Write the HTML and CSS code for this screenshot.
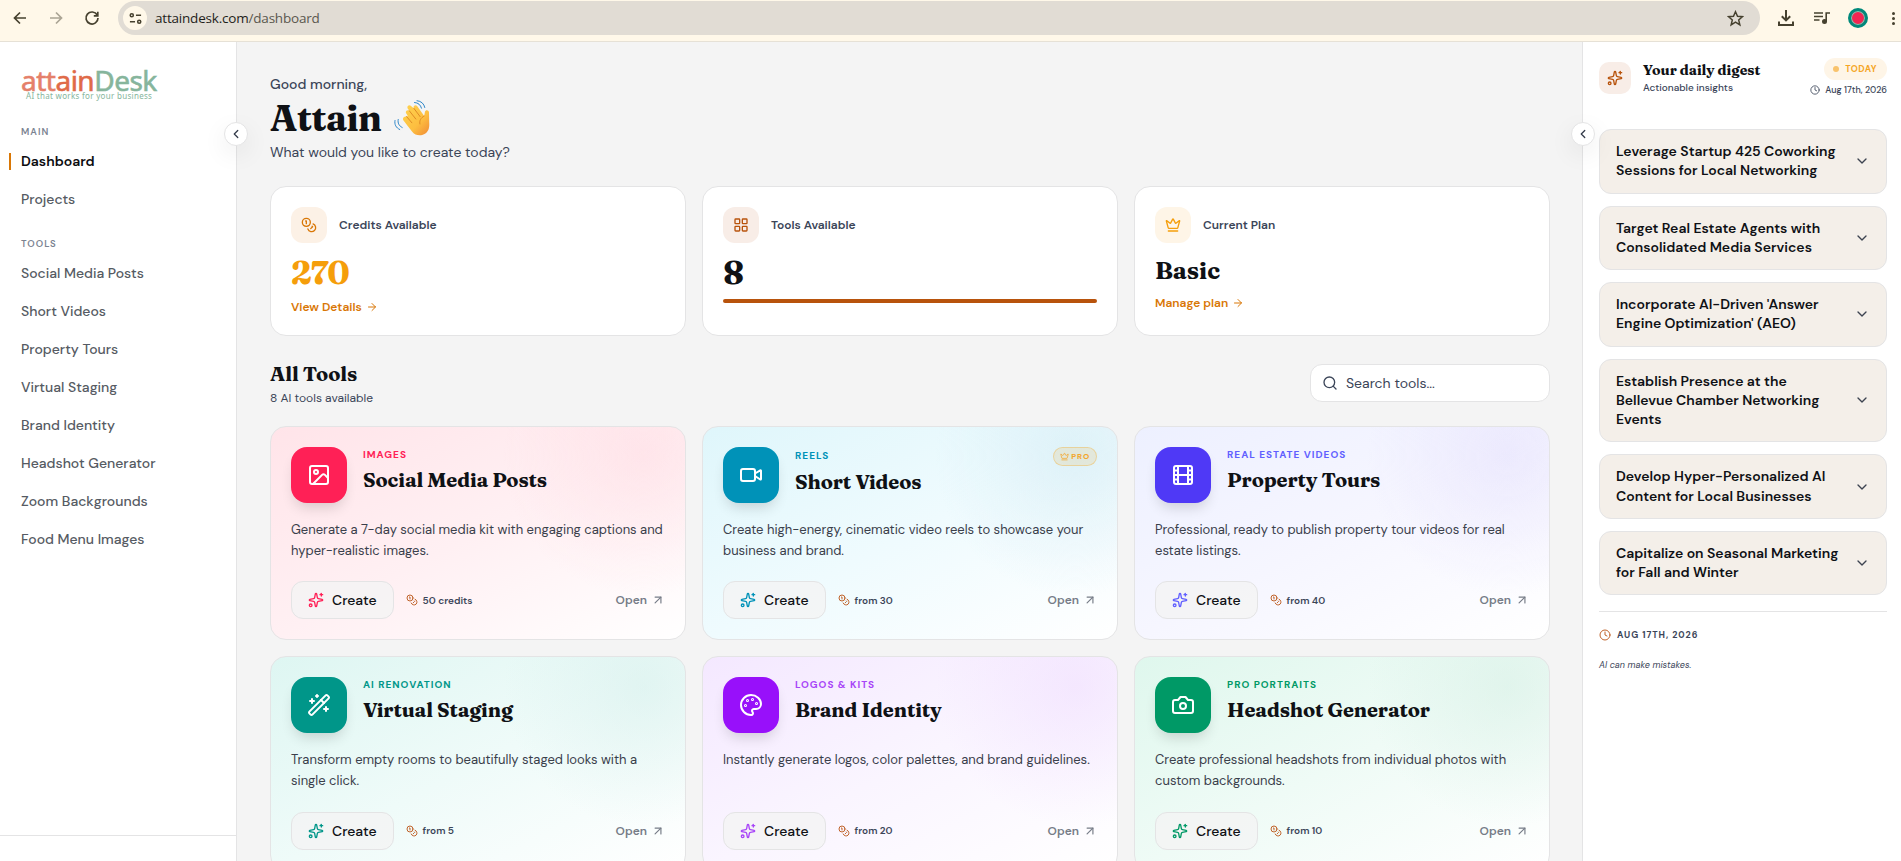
FILE: index.html
```html
<!DOCTYPE html>
<html lang="en">
<head>
    <meta charset="UTF-8">
    <title>attainDesk - Dashboard</title>
    <link rel="stylesheet" href="styles.css">
</head>
<body>
    <!-- Icon sprite -->
    <svg class="sprite" aria-hidden="true">
        <symbol id="i-coins" viewBox="0 0 24 24"><circle cx="8" cy="8" r="6"/><path d="M18.09 10.37A6 6 0 1 1 10.34 18"/><path d="M7 6h1v4"/><path d="m16.71 13.88.7.71-2.82 2.82"/></symbol>
        <symbol id="i-grid" viewBox="0 0 24 24"><rect x="3" y="3" width="7" height="7" rx="1"/><rect x="14" y="3" width="7" height="7" rx="1"/><rect x="14" y="14" width="7" height="7" rx="1"/><rect x="3" y="14" width="7" height="7" rx="1"/></symbol>
        <symbol id="i-crown" viewBox="0 0 24 24"><path d="M11.562 3.266a.5.5 0 0 1 .876 0L15.39 8.87a1 1 0 0 0 1.516.294L21.183 5.5a.5.5 0 0 1 .798.519l-2.834 10.246a1 1 0 0 1-.956.734H5.81a1 1 0 0 1-.957-.734L2.02 6.02a.5.5 0 0 1 .798-.519l4.276 3.664a1 1 0 0 0 1.516-.294z"/><path d="M5 21h14"/></symbol>
        <symbol id="i-sparkles" viewBox="0 0 24 24"><path d="M11.017 2.814a1 1 0 0 1 1.966 0l1.051 5.558a2 2 0 0 0 1.594 1.594l5.558 1.051a1 1 0 0 1 0 1.966l-5.558 1.051a2 2 0 0 0-1.594 1.594l-1.051 5.558a1 1 0 0 1-1.966 0l-1.051-5.558a2 2 0 0 0-1.594-1.594l-5.558-1.051a1 1 0 0 1 0-1.966l5.558-1.051a2 2 0 0 0 1.594-1.594z"/><path d="M20 2v4"/><path d="M22 4h-4"/><circle cx="4" cy="20" r="2"/></symbol>
        <symbol id="i-arrow-right" viewBox="0 0 24 24"><path d="M5 12h14"/><path d="m12 5 7 7-7 7"/></symbol>
        <symbol id="i-arrow-up-right" viewBox="0 0 24 24"><path d="M7 7h10v10"/><path d="M7 17 17 7"/></symbol>
        <symbol id="i-search" viewBox="0 0 24 24"><circle cx="11" cy="11" r="8"/><path d="m21 21-4.3-4.3"/></symbol>
        <symbol id="i-image" viewBox="0 0 24 24"><rect x="3" y="3" width="18" height="18" rx="2"/><circle cx="9" cy="9" r="2"/><path d="m21 15-3.086-3.086a2 2 0 0 0-2.828 0L6 21"/></symbol>
        <symbol id="i-video" viewBox="0 0 24 24"><path d="m16 13 5.223 3.482a.5.5 0 0 0 .777-.416V7.87a.5.5 0 0 0-.752-.432L16 10.5"/><rect x="2" y="6" width="14" height="12" rx="2"/></symbol>
        <symbol id="i-film" viewBox="0 0 24 24"><rect x="3" y="3" width="18" height="18" rx="2"/><path d="M7 3v18M3 7.5h4M3 12h18M3 16.5h4M17 3v18M17 7.5h4M17 16.5h4"/></symbol>
        <symbol id="i-wand" viewBox="0 0 24 24"><path d="m21.64 3.64-1.28-1.28a1.21 1.21 0 0 0-1.72 0L2.36 18.64a1.21 1.21 0 0 0 0 1.72l1.28 1.28a1.2 1.2 0 0 0 1.72 0L21.64 5.36a1.2 1.2 0 0 0 0-1.72"/><path d="m14 7 3 3M5 6v4M19 14v4M10 2v2M7 8H3M21 16h-4M11 3H9"/></symbol>
        <symbol id="i-palette" viewBox="0 0 24 24"><path d="M12 22a1 1 0 0 1 0-20 10 9 0 0 1 10 9 5 5 0 0 1-5 5h-2.25a1.75 1.75 0 0 0-1.4 2.8l.3.4a1.75 1.75 0 0 1-1.4 2.8z"/><circle cx="13.5" cy="6.5" r=".5"/><circle cx="17.5" cy="10.5" r=".5"/><circle cx="6.5" cy="12.5" r=".5"/><circle cx="8.5" cy="7.5" r=".5"/></symbol>
        <symbol id="i-camera" viewBox="0 0 24 24"><path d="M14.5 4h-5L7 7H4a2 2 0 0 0-2 2v9a2 2 0 0 0 2 2h16a2 2 0 0 0 2-2V9a2 2 0 0 0-2-2h-3l-2.5-3z"/><circle cx="12" cy="13" r="3"/></symbol>
        <symbol id="i-chevron-left" viewBox="0 0 24 24"><path d="m15 18-6-6 6-6"/></symbol>
        <symbol id="i-chevron-down" viewBox="0 0 24 24"><path d="m6 9 6 6 6-6"/></symbol>
        <symbol id="i-clock" viewBox="0 0 24 24"><circle cx="12" cy="12" r="10"/><path d="M12 6v6l4 2"/></symbol>
    </svg>

    <!-- Browser toolbar -->
    <div class="browser-bar">
        <div class="nav-buttons">
            <svg class="nav-icon" viewBox="0 0 16 16"><path d="M14 8H2.5M8 2.5 2.5 8 8 13.5"/></svg>
            <svg class="nav-icon nav-icon-off" viewBox="0 0 16 16"><path d="M2 8h11.5M8 2.5 13.5 8 8 13.5"/></svg>
            <svg class="nav-icon" viewBox="0 0 16 16"><path d="M13.2 5A6 6 0 1 0 14 8M13.8 1.8v4h-4"/></svg>
        </div>
        <div class="address-bar">
            <span class="site-info">
                <svg viewBox="0 0 14 14"><circle cx="3" cy="3.5" r="1.7"/><path d="M7.5 3.5H13M1 10.5h5.5"/><circle cx="11" cy="10.5" r="1.7"/></svg>
            </span>
            <span class="url">attaindesk.com<span class="url-path">/dashboard</span></span>
            <svg class="star" viewBox="0 0 16 16"><path d="m8 1.6 1.9 4.3 4.6.4-3.5 3.1 1.1 4.6L8 11.5 3.9 14 5 9.4 1.5 6.3l4.6-.4z"/></svg>
        </div>
        <div class="browser-actions">
            <svg class="download" viewBox="0 0 16 16"><path d="M8 0v10M3.8 6.2 8 10.4l4.2-4.2M1 11.5V15h14v-3.5"/></svg>
            <svg class="queue" viewBox="0 0 16 14"><path d="M0 2h9M0 5.5h9M0 9h5.5M12.2 10.5V2H16"/><circle cx="10.5" cy="10.5" r="1.7"/></svg>
            <span class="avatar"></span>
            <span class="more"><i></i><i></i><i></i></span>
        </div>
    </div>

    <div class="app">
        <aside class="sidebar">
            <div class="logo">
                <div class="logo-name"><span class="logo-att">att</span><span class="logo-ain">ain</span><span class="logo-desk">Desk</span></div>
                <div class="logo-tagline">AI that works for your business</div>
            </div>
            <h4 class="nav-heading">Main</h4>
            <nav class="nav-list">
                <a class="nav-link active">Dashboard</a>
                <a class="nav-link">Projects</a>
            </nav>
            <h4 class="nav-heading">Tools</h4>
            <nav class="nav-list">
                <a class="nav-link">Social Media Posts</a>
                <a class="nav-link">Short Videos</a>
                <a class="nav-link">Property Tours</a>
                <a class="nav-link">Virtual Staging</a>
                <a class="nav-link">Brand Identity</a>
                <a class="nav-link">Headshot Generator</a>
                <a class="nav-link">Zoom Backgrounds</a>
                <a class="nav-link">Food Menu Images</a>
            </nav>
            <div class="sidebar-footer"></div>
            <button class="toggle toggle-left"><svg class="icon"><use href="#i-chevron-left"/></svg></button>
        </aside>

        <main class="main">
            <p class="greeting">Good morning,</p>
            <h1 class="user-name">Attain
                <svg class="wave" viewBox="0 0 36 36">
                    <defs>
                        <linearGradient id="skin" x1="0" y1="0" x2="1" y2="1">
                            <stop offset="0" stop-color="#ffd34f"/>
                            <stop offset=".6" stop-color="#fdbe40"/>
                            <stop offset="1" stop-color="#f08a35"/>
                        </linearGradient>
                    </defs>
                    <path fill="url(#skin)" d="M9.5 20.5 18 31.5c3 4 8.500 5 12.500 2.500 4.500-2.500 5-7 4.700-11.500L35 12.500c-.1-2.600-3.600-3-4.100-.4L30.200 16 23.300 6.300c-1.700-2.200-4.800-.2-3.400 2.100L17 5.900c-2.200-1.700-4.700.8-3.100 2.900l1.400 2c-2-1.600-4.500.7-3 2.800l1.500 2.300-1.200.7c-2.500-.8-4.700 1.600-3.100 3.900z"/>
                    <path class="wave-lines" stroke="#df8b25" d="m15.300 10.800 6.500 8.200M19.900 8.400l6.300 8.300M12.600 16.600l5.300 6.200M30.200 16c-3.500 1.800-5 4.800-4.300 8"/>
                    <path class="wave-lines" stroke="#2f87c9" d="M20.500 2.500c3.800.2 6 2.300 7 5.700M23 .7c4.300.4 7 3 7.800 6.800M4.200 19.500c-.7 3.700.8 6.400 4 8M1 20.500c-.8 4 1 7.300 4.700 9"/>
                </svg>
            </h1>
            <p class="subtitle">What would you like to create today?</p>

            <section class="stats">
                <div class="stat-card">
                    <div class="stat-head">
                        <span class="stat-icon stat-orange"><svg class="icon"><use href="#i-coins"/></svg></span>
                        <span class="stat-label">Credits Available</span>
                    </div>
                    <div class="stat-value stat-value-credits">270</div>
                    <a class="stat-link">View Details <svg class="icon"><use href="#i-arrow-right"/></svg></a>
                </div>
                <div class="stat-card">
                    <div class="stat-head">
                        <span class="stat-icon stat-brown"><svg class="icon"><use href="#i-grid"/></svg></span>
                        <span class="stat-label">Tools Available</span>
                    </div>
                    <div class="stat-value">8</div>
                    <div class="stat-bar"></div>
                </div>
                <div class="stat-card">
                    <div class="stat-head">
                        <span class="stat-icon stat-amber"><svg class="icon"><use href="#i-crown"/></svg></span>
                        <span class="stat-label">Current Plan</span>
                    </div>
                    <div class="stat-value stat-value-plan">Basic</div>
                    <a class="stat-link">Manage plan <svg class="icon"><use href="#i-arrow-right"/></svg></a>
                </div>
            </section>

            <section class="tools-head">
                <div>
                    <h2 class="section-title">All Tools</h2>
                    <p class="section-sub">8 AI tools available</p>
                </div>
                <div class="search">
                    <svg class="icon"><use href="#i-search"/></svg>
                    <span>Search tools...</span>
                </div>
            </section>

            <section class="tools">
                <article class="tool-card rose">
                    <div class="tool-head">
                        <span class="tool-icon"><svg class="icon"><use href="#i-image"/></svg></span>
                        <div class="tool-titles">
                            <div class="tool-meta"><span class="tool-label">Images</span></div>
                            <h3 class="tool-title">Social Media Posts</h3>
                        </div>
                    </div>
                    <p class="tool-desc">Generate a 7-day social media kit with engaging captions and hyper-realistic images.</p>
                    <div class="tool-foot">
                        <button class="create-btn"><svg class="icon"><use href="#i-sparkles"/></svg>Create</button>
                        <span class="credits"><svg class="icon"><use href="#i-coins"/></svg>50 credits</span>
                        <a class="open-link">Open <svg class="icon"><use href="#i-arrow-up-right"/></svg></a>
                    </div>
                </article>

                <article class="tool-card cyan">
                    <div class="tool-head">
                        <span class="tool-icon"><svg class="icon"><use href="#i-video"/></svg></span>
                        <div class="tool-titles">
                            <div class="tool-meta">
                                <span class="tool-label">Reels</span>
                                <span class="pro-badge"><svg class="icon"><use href="#i-crown"/></svg>PRO</span>
                            </div>
                            <h3 class="tool-title">Short Videos</h3>
                        </div>
                    </div>
                    <p class="tool-desc">Create high-energy, cinematic video reels to showcase your business and brand.</p>
                    <div class="tool-foot">
                        <button class="create-btn"><svg class="icon"><use href="#i-sparkles"/></svg>Create</button>
                        <span class="credits"><svg class="icon"><use href="#i-coins"/></svg>from 30</span>
                        <a class="open-link">Open <svg class="icon"><use href="#i-arrow-up-right"/></svg></a>
                    </div>
                </article>

                <article class="tool-card indigo">
                    <div class="tool-head">
                        <span class="tool-icon"><svg class="icon"><use href="#i-film"/></svg></span>
                        <div class="tool-titles">
                            <div class="tool-meta"><span class="tool-label">Real Estate Videos</span></div>
                            <h3 class="tool-title">Property Tours</h3>
                        </div>
                    </div>
                    <p class="tool-desc">Professional, ready to publish property tour videos for real estate listings.</p>
                    <div class="tool-foot">
                        <button class="create-btn"><svg class="icon"><use href="#i-sparkles"/></svg>Create</button>
                        <span class="credits"><svg class="icon"><use href="#i-coins"/></svg>from 40</span>
                        <a class="open-link">Open <svg class="icon"><use href="#i-arrow-up-right"/></svg></a>
                    </div>
                </article>

                <article class="tool-card teal">
                    <div class="tool-head">
                        <span class="tool-icon"><svg class="icon"><use href="#i-wand"/></svg></span>
                        <div class="tool-titles">
                            <div class="tool-meta"><span class="tool-label">AI Renovation</span></div>
                            <h3 class="tool-title">Virtual Staging</h3>
                        </div>
                    </div>
                    <p class="tool-desc">Transform empty rooms to beautifully staged looks with a single click.</p>
                    <div class="tool-foot">
                        <button class="create-btn"><svg class="icon"><use href="#i-sparkles"/></svg>Create</button>
                        <span class="credits"><svg class="icon"><use href="#i-coins"/></svg>from 5</span>
                        <a class="open-link">Open <svg class="icon"><use href="#i-arrow-up-right"/></svg></a>
                    </div>
                </article>

                <article class="tool-card purple">
                    <div class="tool-head">
                        <span class="tool-icon"><svg class="icon"><use href="#i-palette"/></svg></span>
                        <div class="tool-titles">
                            <div class="tool-meta"><span class="tool-label">Logos &amp; Kits</span></div>
                            <h3 class="tool-title">Brand Identity</h3>
                        </div>
                    </div>
                    <p class="tool-desc">Instantly generate logos, color palettes, and brand guidelines.</p>
                    <div class="tool-foot">
                        <button class="create-btn"><svg class="icon"><use href="#i-sparkles"/></svg>Create</button>
                        <span class="credits"><svg class="icon"><use href="#i-coins"/></svg>from 20</span>
                        <a class="open-link">Open <svg class="icon"><use href="#i-arrow-up-right"/></svg></a>
                    </div>
                </article>

                <article class="tool-card emerald">
                    <div class="tool-head">
                        <span class="tool-icon"><svg class="icon"><use href="#i-camera"/></svg></span>
                        <div class="tool-titles">
                            <div class="tool-meta"><span class="tool-label">Pro Portraits</span></div>
                            <h3 class="tool-title">Headshot Generator</h3>
                        </div>
                    </div>
                    <p class="tool-desc">Create professional headshots from individual photos with custom backgrounds.</p>
                    <div class="tool-foot">
                        <button class="create-btn"><svg class="icon"><use href="#i-sparkles"/></svg>Create</button>
                        <span class="credits"><svg class="icon"><use href="#i-coins"/></svg>from 10</span>
                        <a class="open-link">Open <svg class="icon"><use href="#i-arrow-up-right"/></svg></a>
                    </div>
                </article>
            </section>
        </main>

        <aside class="digest">
            <button class="toggle toggle-right"><svg class="icon"><use href="#i-chevron-left"/></svg></button>
            <div class="digest-head">
                <span class="digest-icon"><svg class="icon"><use href="#i-sparkles"/></svg></span>
                <div>
                    <h2 class="digest-title">Your daily digest</h2>
                    <p class="digest-sub">Actionable insights</p>
                </div>
                <div class="digest-when">
                    <span class="today">Today</span>
                    <span class="digest-date"><svg class="icon"><use href="#i-clock"/></svg>Aug 17th, 2026</span>
                </div>
            </div>
            <div class="insights">
                <div class="insight"><span>Leverage Startup 425 Coworking<br>Sessions for Local Networking</span><svg class="icon"><use href="#i-chevron-down"/></svg></div>
                <div class="insight"><span>Target Real Estate Agents with<br>Consolidated Media Services</span><svg class="icon"><use href="#i-chevron-down"/></svg></div>
                <div class="insight"><span>Incorporate AI-Driven 'Answer<br>Engine Optimization' (AEO)</span><svg class="icon"><use href="#i-chevron-down"/></svg></div>
                <div class="insight"><span>Establish Presence at the<br>Bellevue Chamber Networking<br>Events</span><svg class="icon"><use href="#i-chevron-down"/></svg></div>
                <div class="insight"><span>Develop Hyper-Personalized AI<br>Content for Local Businesses</span><svg class="icon"><use href="#i-chevron-down"/></svg></div>
                <div class="insight"><span>Capitalize on Seasonal Marketing<br>for Fall and Winter</span><svg class="icon"><use href="#i-chevron-down"/></svg></div>
            </div>
            <div class="digest-foot">
                <div class="foot-date"><svg class="icon"><use href="#i-clock"/></svg>Aug 17th, 2026</div>
                <p class="disclaimer">AI can make mistakes.</p>
            </div>
        </aside>
    </div>
</body>
</html>
```
FILE: styles.css
```css
:root {
    --text: #0f1115;
    --text-soft: #3b4558;
    --border: #e4e4e5;
    --orange: #d97706;
    --amber: #f59e0b;
    --brown: #b8530c;
    --page: #f4f4f4;
    --serif: Fraunces, "Liberation Serif", serif;
}

* {
    margin: 0;
    padding: 0;
    box-sizing: border-box;
}

body {
    width: 100%;
    height: 100vh;
    overflow: hidden;
    display: flex;
    flex-direction: column;
    font-family: "DM Sans", Inter, sans-serif;
    font-size: 14px;
    color: var(--text);
    background: var(--page);
}

button {
    font: inherit;
    color: inherit;
}

.sprite {
    display: none;
}

.icon {
    width: 16px;
    height: 16px;
    flex: none;
    fill: none;
    stroke: currentColor;
    stroke-width: 2;
    stroke-linecap: round;
    stroke-linejoin: round;
}

/* Browser toolbar */
.browser-bar {
    height: 42px;
    flex: none;
    display: flex;
    align-items: flex-start;
    padding: 1px 0 0 12px;
    background: #fff8e9;
    border-bottom: 1px solid #e6e1d6;
    color: #46412f;
}

.nav-buttons {
    width: 106px;
    height: 34px;
    display: flex;
    align-items: center;
    gap: 20px;
}

.nav-icon {
    width: 16px;
    height: 16px;
    fill: none;
    stroke: currentColor;
    stroke-width: 1.7;
}

.nav-icon-off {
    opacity: .45;
}

.address-bar {
    width: 1642px;
    height: 34px;
    display: flex;
    align-items: center;
    padding: 0 16px 0 5px;
    border-radius: 17px;
    background: #e1dcd4;
}

.site-info {
    width: 24px;
    height: 24px;
    display: flex;
    align-items: center;
    justify-content: center;
    border-radius: 50%;
    background: #fff8e9;
}

.site-info svg {
    width: 13px;
    height: 13px;
    fill: none;
    stroke: currentColor;
    stroke-width: 1.6;
}

.url {
    margin-left: 8px;
    font-family: "Open Sans", sans-serif;
    font-size: 13.5px;
    letter-spacing: -.2px;
    color: #1f1e1a;
}

.url-path {
    color: #5a574e;
}

.star {
    width: 17px;
    height: 17px;
    margin-left: auto;
    fill: none;
    stroke: currentColor;
    stroke-width: 1.4;
}

.browser-actions {
    flex: 1;
    height: 34px;
    display: flex;
    align-items: center;
    padding-left: 18px;
}

.download {
    width: 16px;
    height: 16px;
    fill: none;
    stroke: currentColor;
    stroke-width: 2;
}

.queue {
    width: 16px;
    height: 14px;
    margin-left: 20px;
    fill: none;
    stroke: currentColor;
    stroke-width: 1.6;
}

.queue circle {
    fill: currentColor;
}

.avatar {
    width: 20px;
    height: 20px;
    margin-left: 18px;
    border-radius: 50%;
    border: 3px solid #00897b;
    background: #f22553;
    box-shadow: inset 0 0 0 1px #6fd3b8;
}

.more {
    display: flex;
    flex-direction: column;
    gap: 2px;
    margin-left: 24px;
}

.more i {
    width: 3px;
    height: 3px;
    border-radius: 50%;
    background: currentColor;
}

.app {
    flex: 1;
    min-height: 0;
    display: flex;
}

/* Sidebar */
.sidebar {
    position: relative;
    width: 237px;
    flex: none;
    display: flex;
    flex-direction: column;
    padding: 20px 0 0 21px;
    background: #fff;
    border-right: 1px solid var(--border);
}

.logo {
    height: 56px;
    font-family: "Noto Sans", sans-serif;
}

.logo-name {
    font-size: 28px;
    line-height: 36px;
    font-weight: 400;
    letter-spacing: -.5px;
    -webkit-text-stroke: .6px;
}

.logo-att {
    color: #e5806a;
}

.logo-ain {
    color: #e06a48;
}

.logo-desk {
    color: #86b59c;
}

.logo-tagline {
    margin: -7px 0 0 5px;
    font-size: 8px;
    line-height: 10px;
    letter-spacing: .3px;
    color: #86b59c;
    white-space: nowrap;
}

.nav-heading {
    margin-top: 6px;
    font-size: 9.5px;
    line-height: 16px;
    font-weight: 600;
    letter-spacing: 1px;
    text-transform: uppercase;
    color: #7b8391;
}

.nav-list {
    display: flex;
    flex-direction: column;
    margin: 2px 0 12px;
}

.nav-link {
    position: relative;
    line-height: 38px;
    font-weight: 500;
    color: #565b63;
}

.nav-link.active {
    color: #0c0d10;
    font-weight: 600;
}

.nav-link.active::before {
    content: "";
    position: absolute;
    left: -12px;
    top: 11px;
    width: 2px;
    height: 17px;
    background: var(--orange);
}

.sidebar-footer {
    height: 26px;
    margin: auto 0 0 -21px;
    border-top: 1px solid var(--border);
}

.toggle {
    position: absolute;
    top: 80px;
    z-index: 2;
    width: 24px;
    height: 24px;
    display: flex;
    align-items: center;
    justify-content: center;
    border: 1px solid var(--border);
    border-radius: 50%;
    background: #fff;
    color: #333b4a;
    box-shadow: 0 8px 24px rgba(0, 0, 0, .08);
}

.toggle .icon {
    width: 14px;
    height: 14px;
    stroke-width: 2.2;
}

.toggle-left {
    right: -12px;
}

.toggle-right {
    left: -12px;
}

/* Main column */
.main {
    width: 1345px;
    flex: none;
    padding: 32px 32px 0 33px;
}

.greeting,
.subtitle {
    line-height: 20px;
    color: var(--text-soft);
}

.greeting {
    font-weight: 500;
}

.user-name {
    display: flex;
    align-items: center;
    gap: 13px;
    font-family: var(--serif);
    font-size: 36px;
    line-height: 48px;
    letter-spacing: -.5px;
}

.wave {
    width: 36px;
    height: 36px;
}

.wave-lines {
    fill: none;
    stroke-width: 1;
    stroke-linecap: round;
}

.stats {
    display: grid;
    grid-template-columns: repeat(3, 1fr);
    gap: 16px;
    margin-top: 24px;
}

.stat-card {
    height: 150px;
    padding: 20px;
    background: #fff;
    border: 1px solid var(--border);
    border-radius: 16px;
}

.stat-head {
    display: flex;
    align-items: center;
    gap: 12px;
}

.stat-icon {
    width: 36px;
    height: 36px;
    display: flex;
    align-items: center;
    justify-content: center;
    border-radius: 12px;
}

.stat-orange {
    color: var(--orange);
    background: #fcf1e6;
}

.stat-brown {
    color: var(--brown);
    background: #f8ede7;
}

.stat-amber {
    color: var(--amber);
    background: #fef5e7;
}

.stat-label {
    font-size: 12px;
    font-weight: 600;
    color: var(--text-soft);
}

.stat-value {
    margin: 12px 0 8px;
    font-family: var(--serif);
    font-size: 32px;
    line-height: 36px;
    font-weight: 700;
    letter-spacing: -.8px;
}

.stat-value-credits {
    color: var(--amber);
}

.stat-value-plan {
    font-size: 24px;
    line-height: 32px;
    letter-spacing: 0;
}

.stat-link {
    display: flex;
    align-items: center;
    gap: 4px;
    font-size: 12px;
    line-height: 16px;
    font-weight: 600;
    color: var(--orange);
}

.stat-link .icon {
    width: 12px;
    height: 12px;
}

.stat-bar {
    height: 4px;
    border-radius: 2px;
    background: var(--brown);
}

.tools-head {
    display: flex;
    align-items: center;
    justify-content: space-between;
    margin: 24px 0 20px;
}

.section-title {
    font-family: var(--serif);
    font-size: 20px;
    line-height: 28px;
    letter-spacing: -.1px;
}

.section-sub {
    margin-top: 2px;
    font-size: 12px;
    line-height: 16px;
    color: var(--text-soft);
}

.search {
    width: 240px;
    height: 38px;
    display: flex;
    align-items: center;
    gap: 8px;
    padding-left: 11px;
    background: #fff;
    border: 1px solid var(--border);
    border-radius: 12px;
    color: var(--text-soft);
}

/* Tool cards */
.tools {
    display: grid;
    grid-template-columns: repeat(3, 1fr);
    gap: 16px;
}

.tool-card {
    padding: 20px;
    border: 1px solid var(--border);
    border-radius: 16px;
    background:
        radial-gradient(circle at 90% 14%, var(--glow), transparent 140px),
        linear-gradient(to bottom right, var(--from), var(--via) 50%, #fff);
}

.rose {
    --accent: #ff2056;
    --label: #ff2056;
    --from: #ffe4e9;
    --via: #fff0f3;
    --glow: rgba(255, 215, 223, .45);
}

.cyan {
    --accent: #0092b8;
    --label: #0092b8;
    --from: #dff6fb;
    --via: #effbfe;
    --glow: rgba(205, 232, 243, .5);
}

.indigo {
    --accent: #4f39f6;
    --label: #615fff;
    --from: #edf0ff;
    --via: #f6f6ff;
    --glow: rgba(226, 221, 252, .5);
}

.teal {
    --accent: #009689;
    --label: #009689;
    --from: #def6f2;
    --via: #effbf9;
    --glow: rgba(210, 238, 234, .5);
}

.purple {
    --accent: #9810fa;
    --label: #a845f8;
    --from: #f4e8ff;
    --via: #faf5ff;
    --glow: rgba(238, 217, 254, .5);
}

.emerald {
    --accent: #009966;
    --label: #009966;
    --from: #dff7ed;
    --via: #effbf6;
    --glow: rgba(210, 238, 226, .5);
}

.tool-head {
    display: flex;
    gap: 16px;
}

.tool-icon {
    width: 56px;
    height: 56px;
    flex: none;
    display: flex;
    align-items: center;
    justify-content: center;
    border-radius: 16px;
    background: var(--accent);
    color: #fff;
    box-shadow: 0 8px 14px -4px rgba(0, 0, 0, .16);
}

.tool-icon .icon {
    width: 24px;
    height: 24px;
}

.tool-titles {
    flex: 1;
}

.tool-meta {
    min-height: 16px;
    display: flex;
    align-items: center;
    justify-content: space-between;
}

.tool-label {
    font-size: 10px;
    line-height: 16px;
    font-weight: 700;
    letter-spacing: 1px;
    text-transform: uppercase;
    color: var(--label);
}

.pro-badge {
    height: 18.5px;
    display: flex;
    align-items: center;
    gap: 2px;
    padding: 0 6px;
    border: 1px solid rgba(245, 158, 11, .3);
    border-radius: 10px;
    background: rgba(245, 158, 11, .12);
    font-size: 8px;
    font-weight: 700;
    letter-spacing: .8px;
    color: #f3a62c;
}

.pro-badge .icon {
    width: 9px;
    height: 9px;
}

.tool-title {
    margin-top: 2.5px;
    font-family: var(--serif);
    font-size: 20px;
    line-height: 28px;
    letter-spacing: -.1px;
    white-space: nowrap;
}

.tool-desc {
    min-height: 42.25px;
    margin: 16px 0 20px;
    font-size: 13px;
    line-height: 21.125px;
    color: #3a404b;
}

.tool-foot {
    display: flex;
    align-items: center;
}

.create-btn {
    height: 38px;
    display: flex;
    align-items: center;
    gap: 8px;
    padding: 0 16px;
    border: 1px solid var(--border);
    border-radius: 12px;
    background: rgba(244, 244, 244, .8);
    font-weight: 500;
    color: var(--text);
}

.create-btn .icon {
    color: var(--label);
}

.credits {
    display: flex;
    align-items: center;
    gap: 5px;
    margin-left: 12px;
    font-size: 10px;
    font-weight: 600;
    color: var(--text-soft);
}

.credits .icon {
    width: 12px;
    height: 12px;
    color: #c0632a;
}

.open-link {
    display: flex;
    align-items: center;
    gap: 4px;
    margin-left: auto;
    font-size: 12px;
    font-weight: 600;
    color: #767c87;
}

.open-link .icon {
    width: 14px;
    height: 14px;
}

/* Daily digest panel */
.digest {
    position: relative;
    flex: 1;
    padding: 16px 14px 0 16px;
    background: #fff;
    border-left: 1px solid var(--border);
}

.digest-head {
    height: 71px;
    display: flex;
    align-items: flex-start;
}

.digest-icon {
    width: 32px;
    height: 32px;
    display: flex;
    align-items: center;
    justify-content: center;
    margin: 4px 12px 0 0;
    border-radius: 10px;
    background: #f8ede7;
    color: var(--brown);
}

.digest-title {
    margin-top: 2px;
    font-family: var(--serif);
    font-size: 14px;
    line-height: 20px;
    white-space: nowrap;
}

.digest-sub {
    font-size: 10px;
    line-height: 16px;
    font-weight: 500;
    color: var(--text-soft);
}

.digest-when {
    display: flex;
    flex-direction: column;
    align-items: flex-end;
    margin-left: auto;
}

.today {
    height: 22px;
    display: flex;
    align-items: center;
    gap: 6px;
    padding: 0 10px 0 9px;
    border-radius: 11px;
    background: #fef5e7;
    font-size: 9px;
    font-weight: 700;
    letter-spacing: .45px;
    text-transform: uppercase;
    color: #f5a524;
}

.today::before {
    content: "";
    width: 6px;
    height: 6px;
    border-radius: 50%;
    background: #f9c36c;
}

.digest-date {
    display: flex;
    align-items: center;
    gap: 5px;
    margin-top: 2px;
    font-size: 9px;
    line-height: 16px;
    font-weight: 500;
    color: var(--text-soft);
    white-space: nowrap;
}

.digest-date .icon {
    width: 10px;
    height: 10px;
}

.insights {
    display: flex;
    flex-direction: column;
    gap: 12px;
}

.insight {
    display: flex;
    align-items: center;
    justify-content: space-between;
    padding: 12px 16px;
    border: 1px solid var(--border);
    border-radius: 12px;
    background: #f4efe9;
    font-size: 14px;
    line-height: 19.25px;
    font-weight: 600;
    white-space: nowrap;
}

.insight .icon {
    color: #3c4350;
}

.digest-foot {
    margin-top: 16px;
    padding-top: 16px;
    border-top: 1px solid var(--border);
}

.foot-date {
    display: flex;
    align-items: center;
    gap: 6px;
    font-size: 9px;
    line-height: 14px;
    font-weight: 700;
    letter-spacing: .95px;
    text-transform: uppercase;
    color: var(--text-soft);
}

.foot-date .icon {
    width: 12px;
    height: 12px;
    color: #c0632a;
}

.disclaimer {
    margin-top: 16px;
    font-size: 9px;
    line-height: 14px;
    font-style: italic;
    color: var(--text-soft);
}
```
